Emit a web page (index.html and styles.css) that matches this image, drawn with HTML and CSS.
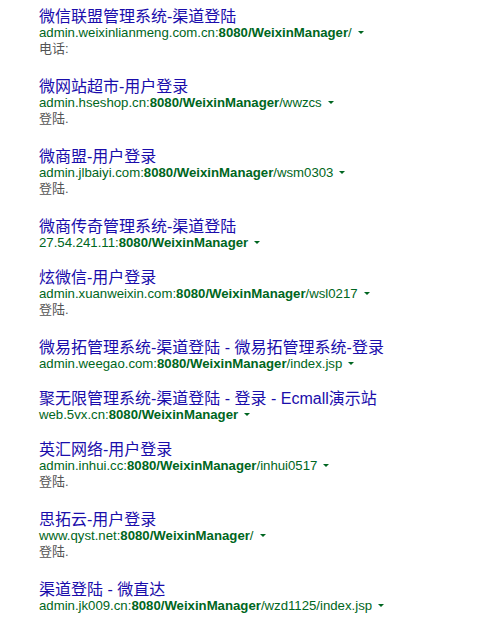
FILE: index.html
```html
<!DOCTYPE html>
<html lang="zh-CN">
<head>
<meta charset="utf-8">
<title>搜索结果</title>
<link rel="stylesheet" href="styles.css">
</head>
<body>
<ol class="results">
  <li class="result">
    <h3 class="title"><a href="#">微信联盟管理系统-渠道登陆</a></h3>
    <div class="url"><cite>admin.weixinlianmeng.com.cn:<b>8080/WeixinManager</b>/</cite><span class="arrow"></span></div>
    <div class="snippet">电话:</div>
  </li>
  <li class="result">
    <h3 class="title"><a href="#">微网站超市-用户登录</a></h3>
    <div class="url"><cite>admin.hseshop.cn:<b>8080/WeixinManager</b>/wwzcs</cite><span class="arrow"></span></div>
    <div class="snippet">登陆.</div>
  </li>
  <li class="result">
    <h3 class="title"><a href="#">微商盟-用户登录</a></h3>
    <div class="url"><cite>admin.jlbaiyi.com:<b>8080/WeixinManager</b>/wsm0303</cite><span class="arrow"></span></div>
    <div class="snippet">登陆.</div>
  </li>
  <li class="result">
    <h3 class="title"><a href="#">微商传奇管理系统-渠道登陆</a></h3>
    <div class="url"><cite>27.54.241.11:<b>8080/WeixinManager</b></cite><span class="arrow"></span></div>
  </li>
  <li class="result">
    <h3 class="title"><a href="#">炫微信-用户登录</a></h3>
    <div class="url"><cite>admin.xuanweixin.com:<b>8080/WeixinManager</b>/wsl0217</cite><span class="arrow"></span></div>
    <div class="snippet">登陆.</div>
  </li>
  <li class="result">
    <h3 class="title"><a href="#">微易拓管理系统-渠道登陆 - 微易拓管理系统-登录</a></h3>
    <div class="url"><cite>admin.weegao.com:<b>8080/WeixinManager</b>/index.jsp</cite><span class="arrow"></span></div>
  </li>
  <li class="result">
    <h3 class="title"><a href="#">聚无限管理系统-渠道登陆 - 登录 - Ecmall演示站</a></h3>
    <div class="url"><cite>web.5vx.cn:<b>8080/WeixinManager</b></cite><span class="arrow"></span></div>
  </li>
  <li class="result">
    <h3 class="title"><a href="#">英汇网络-用户登录</a></h3>
    <div class="url"><cite>admin.inhui.cc:<b>8080/WeixinManager</b>/inhui0517</cite><span class="arrow"></span></div>
    <div class="snippet">登陆.</div>
  </li>
  <li class="result">
    <h3 class="title"><a href="#">思拓云-用户登录</a></h3>
    <div class="url"><cite>www.qyst.net:<b>8080/WeixinManager</b>/</cite><span class="arrow"></span></div>
    <div class="snippet">登陆.</div>
  </li>
  <li class="result">
    <h3 class="title"><a href="#">渠道登陆 - 微直达</a></h3>
    <div class="url"><cite>admin.jk009.cn:<b>8080/WeixinManager</b>/wzd1125/index.jsp</cite><span class="arrow"></span></div>
  </li>
</ol>
</body>
</html>
```
FILE: styles.css
```css
html, body {
  margin: 0;
  padding: 0;
  background: #fff;
}
body {
  font-family: "Liberation Sans", Arial, "Noto Sans CJK SC", sans-serif;
}
.results {
  list-style: none;
  margin: 0;
  padding: 9px 0 0 39px;
  display: flex;
  flex-direction: column;
  gap: 20px;
}
.result {
  margin: 0;
  padding: 0;
}
.title {
  margin: 0;
  font-size: 16px;
  font-weight: normal;
  line-height: 16px;
  white-space: nowrap;
}
.title a {
  color: #1a0dab;
  text-decoration: none;
}
.url {
  font-size: 13.2px;
  line-height: 14px;
  padding-top: 1px;
  white-space: nowrap;
}
.url cite {
  font-style: normal;
  color: #006621;
}
.url b {
  font-weight: bold;
}
.arrow {
  display: inline-block;
  width: 0;
  height: 0;
  margin-left: 6px;
  vertical-align: 3px;
  border-top: 3px solid #006621;
  border-left: 3px solid transparent;
  border-right: 3px solid transparent;
}
.snippet {
  font-size: 13px;
  line-height: 18px;
  padding: 0 0 1px;
  color: #545454;
}
```
